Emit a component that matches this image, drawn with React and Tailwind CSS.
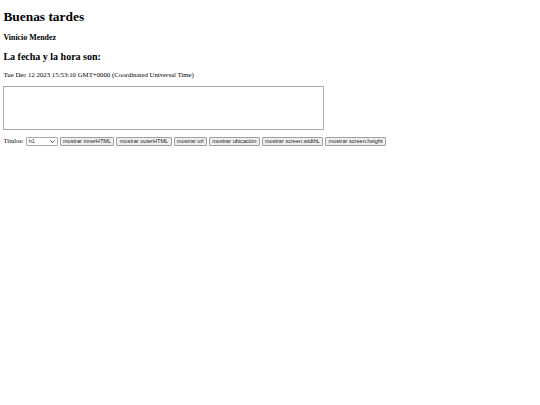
import React from "react";

const botones = [
  "mostrar innerHTML",
  "mostrar outerHTML",
  "mostrar url",
  "mostrar ubicación",
  "mostrar screen.widthL",
  "mostrar screen.height",
];

function App() {
  return (
    <div className="min-h-[405px] bg-white px-[3.4px] pt-px text-black font-['Liberation_Serif',serif] text-[6.8px]">
      <h1 className="mt-[8px] mb-[9px] text-[13.4px] font-bold leading-[15.4px]">Buenas tardes</h1>
      <h3 className="my-[7.9px] text-[7.9px] font-bold leading-[9px]">Vinicio Mendez</h3>
      <h2 className="my-[8.4px] text-[10px] font-bold leading-[11.6px]">La fecha y la hora son:</h2>
      <p className="my-[6.7px] leading-[7.7px]">
        Tue Dec 12 2023 15:53:10 GMT+0000 (Coordinated Universal Time)
      </p>
      <div className="mt-[7.5px] h-[44px] w-[321px] border border-[#a9a9a9] bg-white"></div>

      <div className="mt-[7px] flex items-center gap-[2px] leading-[8px]">
        <span className="text-[6.5px]">Títulos:</span>
        <div className="relative flex h-[9px] w-[32px] items-center rounded-[1px] border border-[#a9a9a9] bg-white pl-[2px] font-['Liberation_Sans',sans-serif] text-[5.6px] text-[#333]">
          <span>h1</span>
          <svg className="absolute right-[2px] top-[2.5px]" width="5" height="3" viewBox="0 0 10 6">
            <path d="M1 1l4 4 4-4" fill="none" stroke="#333" strokeWidth="1.8" />
          </svg>
        </div>
        {botones.map((b) => (
          <button
            key={b}
            className="h-[9px] rounded-[1px] border border-[#a0a0a0] bg-[#efefef] px-[2.3px] font-['Liberation_Sans',sans-serif] text-[5.6px] leading-[7px] text-[#222]"
          >
            {b}
          </button>
        ))}
      </div>
    </div>
  );
}

export default App;
